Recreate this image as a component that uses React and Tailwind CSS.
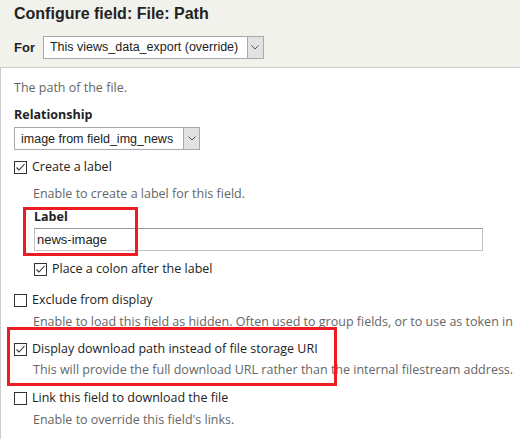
import React from "react";

function CheckBox({ checked }) {
    return (
        <svg width="13" height="13" viewBox="0 0 13 13" className="shrink-0">
            <rect x="0.5" y="0.5" width="12" height="12" fill="#fff" stroke="#333" />
            {checked && <path d="M2.5 6.5 L5 9 L10.5 3" fill="none" stroke="#333" strokeWidth="1.1" />}
        </svg>
    );
}

function Select({ value, className }) {
    return (
        <div className={"flex h-[23px] border border-[#a9a9a9] bg-white font-['Liberation_Sans',Arial,sans-serif] text-[12.5px] text-[#222] " + className}>
            <div className="flex-1 flex items-center pl-[6px] whitespace-nowrap overflow-hidden">{value}</div>
            <div className="w-[16px] flex items-center justify-center bg-[#e2e2e2] border-l border-[#a9a9a9]">
                <svg width="8" height="5" viewBox="0 0 8 5">
                    <path d="M0.5 0.5 L4 4 L7.5 0.5" fill="none" stroke="#555" strokeWidth="1" />
                </svg>
            </div>
        </div>
    );
}

function CheckRow({ checked, label, className = "" }) {
    return (
        <div className={"flex items-center gap-[5px] h-[18px] text-[#222] " + className}>
            <CheckBox checked={checked} />
            <span className="whitespace-nowrap">{label}</span>
        </div>
    );
}

function Desc({ children, className = "" }) {
    return <div className={"h-[18px] leading-[18px] pl-[19px] text-[#666] whitespace-nowrap " + className}>{children}</div>;
}

export default function App() {
    return (
        <div className="w-[520px] h-[439px] overflow-hidden bg-white">
            {/* Header */}
            <div className="h-[68px] bg-[#f2f2ec] border-b border-[#cccccc] pl-[14px] pt-[5px] font-['Liberation_Sans',Arial,sans-serif]">
                <h1 className="text-[16px] leading-[18px] font-bold text-[#222]">Configure field: File: Path</h1>
                <div className="flex items-center gap-[8px] mt-[13px]">
                    <span className="text-[13px] font-bold text-[#222]">For</span>
                    <Select value="This views_data_export (override)" className="w-[221px]" />
                </div>
            </div>

            {/* Body */}
            <div className="relative h-[371px] border-l border-[#cccccc] pl-[13px] pt-[11px] text-[12.5px] leading-[18px] font-['Open_Sans',sans-serif]">
                <div className="text-[#666]">The path of the file.</div>
                <div className="mt-[9px] font-bold text-[#222]">Relationship</div>
                <Select value="image from field_img_news" className="w-[186px] mt-[3px]" />

                <CheckRow checked label="Create a label" className="mt-[8px]" />
                <Desc className="mt-[9px]">Enable to create a label for this field.</Desc>

                <div className="pl-[20px]">
                    <div className="mt-[5px] font-bold text-[#222]">Label</div>
                    <div className="mt-[2px] w-[449px] h-[23px] border border-[#c2c2c2] border-t-[#9a9a9a] flex items-center pl-[2px] font-['Liberation_Sans',Arial,sans-serif] text-[13px] text-[#222]">
                        news-image
                    </div>
                    <CheckRow checked label="Place a colon after the label" className="mt-[9px]" />
                </div>

                <CheckRow label="Exclude from display" className="mt-[13px]" />
                <Desc className="mt-[4px]">
                    Enable to load this field as hidden. Often used to group fields, or to use as token in
                </Desc>

                <CheckRow checked label="Display download path instead of file storage URI" className="mt-[9px]" />
                <Desc className="mt-[3px]">
                    This will provide the full download URL rather than the internal filestream address.
                </Desc>

                <CheckRow label="Link this field to download the file" className="mt-[10px]" />
                <Desc className="mt-[4px]">Enable to override this field's links.</Desc>

                {/* annotation boxes */}
                <div className="absolute left-[22px] top-[139px] w-[115px] h-[49px] border-[3px] border-[#ed1c24]" />
                <div className="absolute left-[6px] top-[259px] w-[330px] h-[59px] border-[3px] border-[#ed1c24]" />
            </div>
        </div>
    );
}
